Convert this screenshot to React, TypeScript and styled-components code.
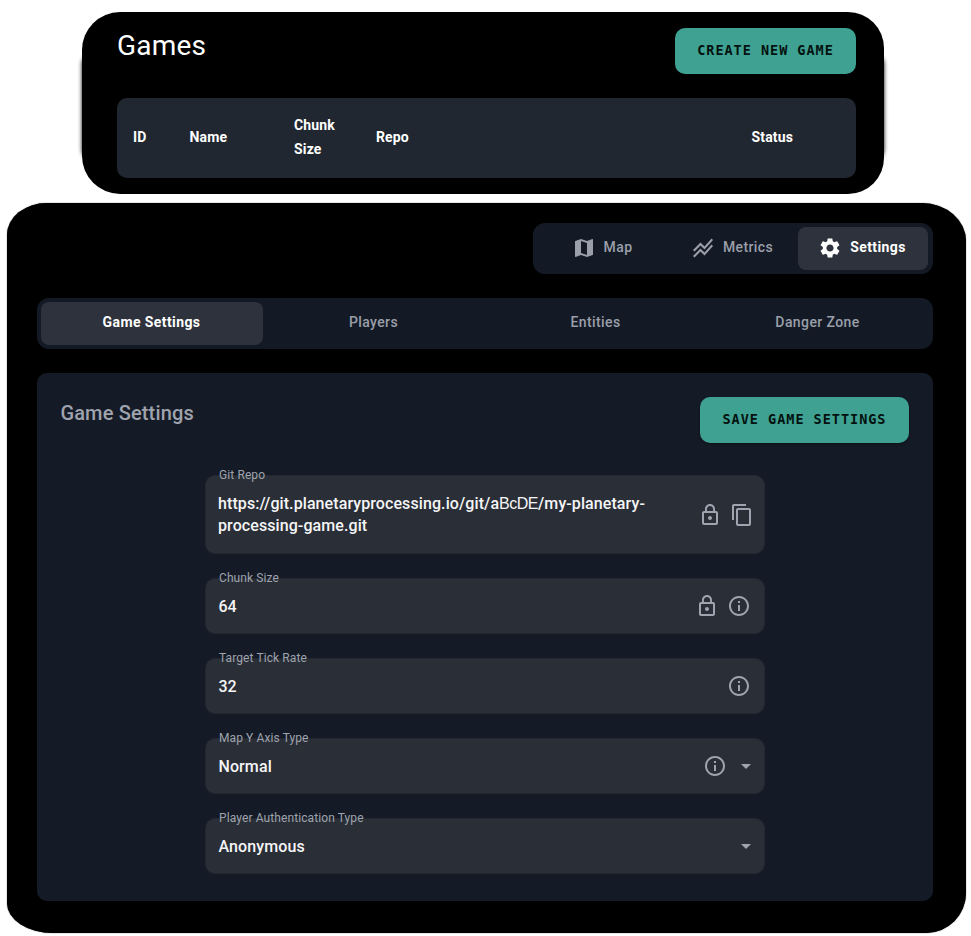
import React from "react";
import styled, { createGlobalStyle, css } from "styled-components";
import {
  MdArrowDropDown,
  MdContentCopy,
  MdInfoOutline,
  MdLockOutline,
  MdMap,
  MdSettings,
  MdStackedLineChart,
} from "react-icons/md";

const GlobalStyle = createGlobalStyle`
  *, *::before, *::after { box-sizing: border-box; }
  body {
    margin: 0;
    background: #fff;
    font-family: Roboto, "Liberation Sans", sans-serif;
    color: #fff;
  }
`;

const Page = styled.main`
  width: 971px;
  height: 936px;
  padding: 12px 5px 3px 7px;
  overflow: hidden;
`;

const GamesPanel = styled.section`
  position: relative;
  width: 802px;
  height: 182px;
  margin: 0 0 9px 75px;
  padding: 16px 28px 16px 35px;
  background: #000;
  border-radius: 38px 36px 36px 38px / 38px 36px 36px 38px;

  &::before {
    content: "";
    position: absolute;
    z-index: -1;
    inset: 44px 0 36px 0;
    background: #000;
    border-radius: 8px;
    box-shadow: 0 0 4px #000;
  }
`;

const GamePanel = styled.section`
  width: 959px;
  height: 730px;
  padding: 20px 33px 32px 30px;
  background: #000;
  border-radius: 40px 44px 40px 46px / 32px 38px 40px 30px;
  box-shadow: 0 0 1px #000;
`;

const PanelHeader = styled.header`
  display: flex;
  justify-content: space-between;
  align-items: flex-start;
`;

const PageTitle = styled.h1`
  margin: 0;
  font-size: 28px;
  line-height: 36px;
  font-weight: 400;
  letter-spacing: 0.2px;
`;

const CardTitle = styled.h2`
  margin: 0 0 0 -0.6px;
  font-size: 20px;
  line-height: 32px;
  font-weight: 500;
  letter-spacing: 0.15px;
  color: #9fa3ae;
`;

const ActionButton = styled.button<{ $width: number }>`
  width: ${(p) => p.$width}px;
  height: 46px;
  padding: 0 0 2px;
  border: 0;
  border-radius: 10px;
  background: #3fa191;
  color: #03110f;
  font: 700 13.5px/20px "DejaVu Sans Mono", monospace;
  letter-spacing: 0.98px;
  text-transform: uppercase;
  white-space: nowrap;
  box-shadow: 0 1px 3px rgba(0, 0, 0, 0.4);
`;

const TableHead = styled.div`
  display: grid;
  grid-template-columns: 56.5px 104.5px 82px 375.5px 1fr;
  align-items: center;
  height: 80px;
  margin-top: 24px;
  padding: 0 16px 2px;
  border-radius: 10px;
  background: #212730;
`;

const HeadCell = styled.div<{ $width?: number }>`
  width: ${(p) => (p.$width ? `${p.$width}px` : "auto")};
  font-size: 14px;
  line-height: 24px;
  font-weight: 700;
  letter-spacing: 0.15px;
`;

const TabBar = styled.nav<{ $compact?: boolean }>`
  display: flex;
  height: 51px;
  padding: 4px;
  border-radius: 12px;
  background: #141a25;
  ${(p) =>
    p.$compact
      ? css`
          width: 400px;
          margin-left: auto;
          padding: 4px 5px;
        `
      : css`
          margin-top: 24px;
        `}
`;

const Tab = styled.div<{ $active?: boolean }>`
  flex: 1;
  display: flex;
  align-items: center;
  justify-content: center;
  gap: 8px;
  padding: 0 1px 4px 0;
  border-radius: 8px;
  font-size: 14px;
  line-height: 20px;
  font-weight: ${(p) => (p.$active ? 700 : 500)};
  letter-spacing: 0.4px;
  color: ${(p) => (p.$active ? "#fff" : "#9a9faa")};
  background: ${(p) => (p.$active ? "#2e323c" : "transparent")};

  svg {
    width: 24px;
    height: 24px;
    margin: 1px 0 -1px -1px;
  }
`;

const Card = styled.section`
  height: 528px;
  margin-top: 24px;
  padding: 24px 24px 0;
  border-radius: 10px;
  background: #151b26;
`;

const Form = styled.div`
  display: flex;
  flex-direction: column;
  gap: 24px;
  width: 560px;
  margin: 32px 0 0 144px;
`;

const Field = styled.div<{ $tall?: boolean; $endPad: number }>`
  position: relative;
  display: flex;
  align-items: center;
  height: ${(p) => (p.$tall ? 79 : 56)}px;
  padding: 0 ${(p) => p.$endPad}px 0 13px;
  border: 1px solid #222730;
  border-radius: 10px;
  background: #2a2e36;
`;

const Label = styled.label`
  position: absolute;
  left: 13px;
  top: -9px;
  font-size: 12px;
  line-height: 16px;
  letter-spacing: 0.1px;
  color: #9fa3ae;
`;

const Value = styled.div<{ $multiline?: boolean }>`
  flex: 1;
  margin-left: ${(p) => (p.$multiline ? -1 : -0.6)}px;
  padding-top: ${(p) => (p.$multiline ? 0 : 2)}px;
  font-size: 16px;
  line-height: 22px;
  font-weight: 500;
  letter-spacing: ${(p) => (p.$multiline ? 0.09 : 0.12)}px;
  color: #f5f5f6;
`;

const Account = styled.span`
  font-family: "Liberation Sans", Arial, sans-serif;
  font-weight: 400;
  letter-spacing: -0.5px;
`;

const Adornments = styled.div<{ $gap?: number }>`
  display: flex;
  gap: ${(p) => p.$gap ?? 8}px;
  color: #a0a4b0;

  svg {
    width: 24px;
    height: 24px;
  }
`;

export default function App() {
  return (
    <Page>
      <GlobalStyle />
      <GamesPanel>
        <PanelHeader>
          <PageTitle>Games</PageTitle>
          <ActionButton $width={181}>Create new game</ActionButton>
        </PanelHeader>
        <TableHead>
          <HeadCell>ID</HeadCell>
          <HeadCell>Name</HeadCell>
          <HeadCell $width={50}>Chunk Size</HeadCell>
          <HeadCell>Repo</HeadCell>
          <HeadCell>Status</HeadCell>
        </TableHead>
      </GamesPanel>

      <GamePanel>
        <TabBar $compact>
          <Tab><MdMap />Map</Tab>
          <Tab><MdStackedLineChart />Metrics</Tab>
          <Tab $active><MdSettings />Settings</Tab>
        </TabBar>
        <TabBar>
          <Tab $active>Game Settings</Tab>
          <Tab>Players</Tab>
          <Tab>Entities</Tab>
          <Tab>Danger Zone</Tab>
        </TabBar>
        <Card>
          <PanelHeader>
            <CardTitle>Game Settings</CardTitle>
            <ActionButton $width={209}>Save game settings</ActionButton>
          </PanelHeader>
          <Form>
            <Field $tall $endPad={10}>
              <Label>Git Repo</Label>
              <Value $multiline>
                https://git.planetaryprocessing.io/git/a<Account>BcDE</Account>/my-planetary-
                <br />
                processing-game.git
              </Value>
              <Adornments><MdLockOutline /><MdContentCopy /></Adornments>
            </Field>
            <Field $endPad={13}>
              <Label>Chunk Size</Label>
              <Value>64</Value>
              <Adornments><MdLockOutline /><MdInfoOutline /></Adornments>
            </Field>
            <Field $endPad={13}>
              <Label>Target Tick Rate</Label>
              <Value>32</Value>
              <Adornments><MdInfoOutline /></Adornments>
            </Field>
            <Field $endPad={6}>
              <Label>Map Y Axis Type</Label>
              <Value>Normal</Value>
              <Adornments $gap={7}><MdInfoOutline /><MdArrowDropDown /></Adornments>
            </Field>
            <Field $endPad={6}>
              <Label>Player Authentication Type</Label>
              <Value>Anonymous</Value>
              <Adornments><MdArrowDropDown /></Adornments>
            </Field>
          </Form>
        </Card>
      </GamePanel>
    </Page>
  );
}
